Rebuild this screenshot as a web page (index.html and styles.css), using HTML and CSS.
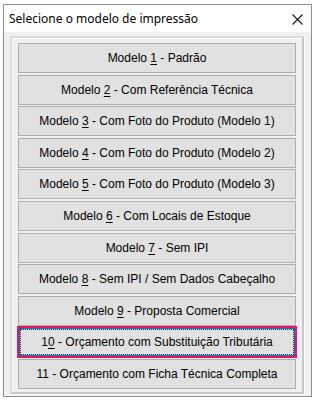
FILE: index.html
```html
<!DOCTYPE html>
<html lang="pt">
<head>
<meta charset="utf-8">
<link rel="stylesheet" href="styles.css">
</head>
<body>
<div class="window">
  <div class="titlebar">
    <span class="title">Selecione o modelo de impressão</span>
    <svg class="close" width="11" height="11" viewBox="0 0 11 11"><path d="M0.5 0.5 L10.5 10.5 M10.5 0.5 L0.5 10.5" stroke="#1a1a1a" stroke-width="1.1" fill="none"/></svg>
  </div>
  <div class="client">
    <div class="group">
      <div class="btn"><span class="label">Modelo <u>1</u> - Padrão</span></div>
      <div class="btn"><span class="label">Modelo <u>2</u> - Com Referência Técnica</span></div>
      <div class="btn"><span class="label">Modelo <u>3</u> - Com Foto do Produto (Modelo 1)</span></div>
      <div class="btn"><span class="label">Modelo <u>4</u> - Com Foto do Produto (Modelo 2)</span></div>
      <div class="btn"><span class="label">Modelo <u>5</u> - Com Foto do Produto (Modelo 3)</span></div>
      <div class="btn"><span class="label">Modelo <u>6</u> - Com Locais de Estoque</span></div>
      <div class="btn"><span class="label">Modelo <u>7</u> - Sem IPI</span></div>
      <div class="btn"><span class="label">Modelo <u>8</u> - Sem IPI / Sem Dados Cabeçalho</span></div>
      <div class="btn"><span class="label">Modelo <u>9</u> - Proposta Comercial</span></div>
      <div class="btn focused"><span class="focusrect"><span class="label">1<u>0</u> - Orçamento com Substituição Tributária</span></span></div>
      <div class="btn"><span class="label">11 - Orçamento com Ficha Técnica Completa</span></div>
    </div>
  </div>
</div>
</body>
</html>
```

FILE: styles.css
```css
html, body {
  margin: 0;
  padding: 0;
  background: #ffffff;
}
body {
  font-family: "Liberation Sans", Arial, sans-serif;
  width: 316px;
  height: 402px;
  overflow: hidden;
}
.window {
  margin: 4px 0 0 3px;
  width: 309px;
  height: 393px;
  box-sizing: border-box;
  border: 1px solid #8e8e8e;
  background: #f0f0f0;
  display: flex;
  flex-direction: column;
}
.titlebar {
  height: 27px;
  flex: none;
  background: #ffffff;
  display: flex;
  align-items: center;
  justify-content: space-between;
  padding: 0 8px 0 5px;
}
.title {
  font-family: "Noto Sans", sans-serif;
  font-size: 12px;
  color: #000;
}
.close {
  display: block;
  margin-top: 1px;
}
.client {
  flex: 1;
  padding: 4px 7px 2px 6px;
  display: flex;
  flex-direction: column;
}
.group {
  flex: 1;
  border-style: solid;
  border-width: 2px;
  border-color: #dcdcdc #c8c8c8 #c8c8c8 #dcdcdc;
  box-shadow: inset 1px 1px 0 #ffffff, 1px 1px 0 #ffffff;
  padding: 5px 6px 2px 6px;
  display: flex;
  flex-direction: column;
  gap: 1.6px;
}
.btn {
  position: relative;
  height: 30px;
  flex: none;
  box-sizing: border-box;
  border: 1px solid #adadad;
  background: #e1e1e1;
  display: flex;
  align-items: center;
  justify-content: center;
  font-size: 12px;
  color: #000;
  white-space: nowrap;
}
.label {
  white-space: pre;
}
.btn u {
  text-underline-offset: 2px;
}
.btn.focused {
  border: 2px solid #0078d7;
}
.btn.focused::after {
  content: "";
  position: absolute;
  inset: -3px -3px -3px -3px;
  border: 2px solid #e8175d;
}
.focusrect {
  align-self: stretch;
  flex: 1;
  margin: 1px;
  outline: 1px dotted #333;
  display: flex;
  align-items: center;
  justify-content: center;
}
```
